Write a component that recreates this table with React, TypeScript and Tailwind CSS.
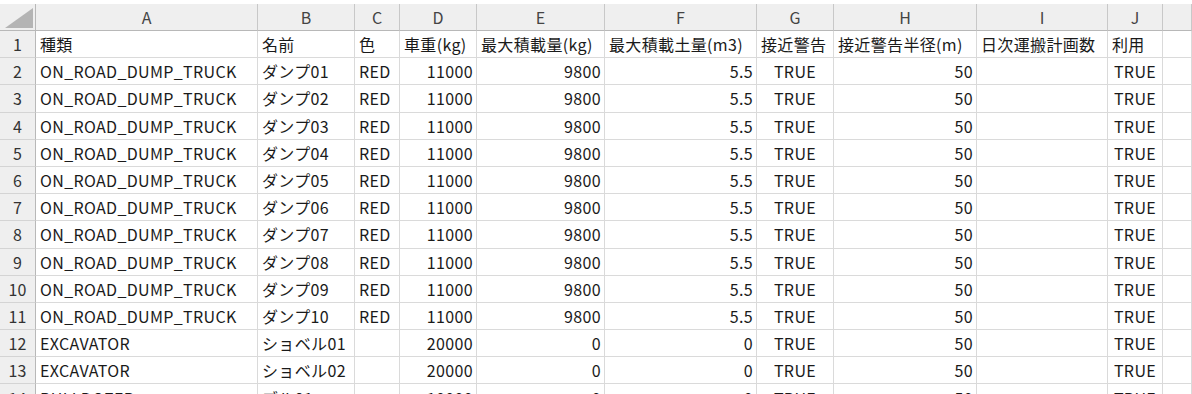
import React from "react";

type Cell = { text: string; align?: "left" | "right" | "center" };

const columns = ["A", "B", "C", "D", "E", "F", "G", "H", "I", "J", ""];

const header: string[] = [
  "種類",
  "名前",
  "色",
  "車重(kg)",
  "最大積載量(kg)",
  "最大積載土量(m3)",
  "接近警告",
  "接近警告半径(m)",
  "日次運搬計画数",
  "利用",
  "",
];

function dataRow(kind: string, name: string, color: string, weight: string, load: string, soil: string): Cell[] {
  return [
    { text: kind },
    { text: name },
    { text: color },
    { text: weight, align: "right" },
    { text: load, align: "right" },
    { text: soil, align: "right" },
    { text: "TRUE", align: "center" },
    { text: "50", align: "right" },
    { text: "" },
    { text: "TRUE", align: "center" },
    { text: "" },
  ];
}

const rows: Cell[][] = [
  header.map((text) => ({ text })),
  ...Array.from({ length: 10 }, (_, i) =>
    dataRow("ON_ROAD_DUMP_TRUCK", `ダンプ${String(i + 1).padStart(2, "0")}`, "RED", "11000", "9800", "5.5")
  ),
  dataRow("EXCAVATOR", "ショベル01", "", "20000", "0", "0"),
  dataRow("EXCAVATOR", "ショベル02", "", "20000", "0", "0"),
  dataRow("BULLDOZER", "ブル01", "", "10000", "0", "0"),
];

const grid =
  "grid grid-cols-[36px_222px_97px_45px_77px_128px_152px_77px_143px_131px_55px_1fr]";

const alignClass = {
  left: "justify-start pl-[4px]",
  right: "justify-end pr-[3px]",
  center: "justify-center",
};

export default function App() {
  return (
    <div
      className="h-[394px] w-[1192px] overflow-hidden bg-white pt-[4px] text-[16px] text-[#1a1a1a]"
      style={{ fontFamily: '"Noto Sans CJK JP", "Noto Sans", sans-serif' }}
    >
      <div className={`${grid} h-[27px] bg-[#efefef] text-[#444]`}>
        <div className="relative border-b border-r border-[#b8b8b8]">
          <svg className="absolute left-[5px] top-[4px]" width="28" height="20" viewBox="0 0 28 20">
            <polygon points="28,0 28,20 0,20" fill="#b4b4b4" />
          </svg>
        </div>
        {columns.map((c, i) => (
          <div
            key={i}
            className="flex items-center justify-center border-b border-r border-[#c8c8c8] border-b-[#b8b8b8] leading-none"
          >
            {c}
          </div>
        ))}
      </div>
      {rows.map((row, r) => (
        <div key={r} className={`${grid} h-[27.2px]`}>
          <div className="flex items-center justify-center border-b border-r border-[#d4d4d4] border-r-[#b8b8b8] bg-[#efefef] text-[#333] leading-none">
            {r + 1}
          </div>
          {row.map((cell, c) => (
            <div
              key={c}
              className={`flex items-center whitespace-nowrap border-b border-r border-[#dadada] leading-none tracking-[0.35px] ${
                alignClass[cell.align ?? "left"]
              }`}
            >
              {cell.text}
            </div>
          ))}
        </div>
      ))}
    </div>
  );
}
